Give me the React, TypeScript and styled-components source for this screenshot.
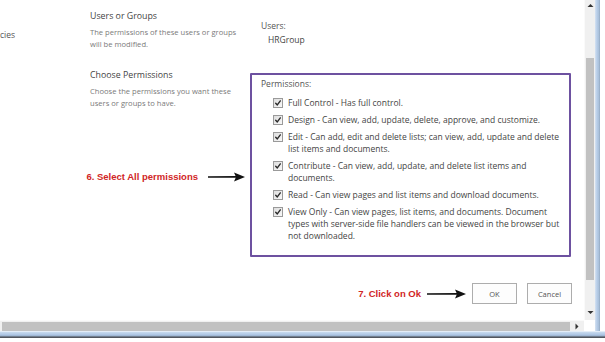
import React from "react";
import styled, { createGlobalStyle } from "styled-components";

const Global = createGlobalStyle`
  html, body { margin: 0; padding: 0; background: #fff; width: 605px; height: 342px; overflow: hidden; }
  body { font-family: "Open Sans", "Segoe UI", sans-serif; color: #444; }
  * { box-sizing: border-box; }
`;

const Window = styled.div`
  display: grid;
  grid-template-columns: 584px 11px 10px;
  grid-template-rows: 320px 11px 11px;
  width: 605px;
  height: 342px;
`;

const Content = styled.main`
  grid-column: 1;
  grid-row: 1;
  overflow: hidden;
  background: #fff;
  padding-top: 9px;
  display: flex;
  flex-direction: column;
`;

const Section = styled.section<{ $top?: number }>`
  display: grid;
  grid-template-columns: 90px 160px 1fr;
  margin-top: ${(p) => p.$top ?? 0}px;
`;

const NavCut = styled.div`
  padding-top: 20px;
  font-size: 8.5px;
  line-height: 12px;
  color: #555;
`;

const Desc = styled.div`
  display: flex;
  flex-direction: column;
`;

const Title = styled.h3`
  margin: 0;
  font-size: 8.8px;
  font-weight: 400;
  line-height: 14px;
  color: #444;
`;

const Note = styled.p`
  margin: 3px 0 0;
  font-size: 7.6px;
  line-height: 12px;
  color: #7a7a7a;
  white-space: nowrap;
`;

const Users = styled.div`
  padding: 11px 0 0 11px;
  font-size: 8.5px;
  line-height: 12px;
  color: #555;
`;

const UserName = styled.div`
  margin-top: 2px;
  padding-left: 7px;
  color: #444;
`;

const LeftPane = styled.div`
  grid-column: 1 / span 2;
  display: flex;
  flex-direction: column;
`;

const LeftText = styled.div`
  padding-left: 90px;
`;

const Callout = styled.div<{ $mt?: number; $pr?: number }>`
  display: flex;
  align-items: center;
  justify-content: flex-end;
  gap: 10px;
  margin-top: ${(p) => p.$mt ?? 0}px;
  padding-right: ${(p) => p.$pr ?? 0}px;
`;

const CalloutText = styled.span`
  font-family: "Liberation Sans", Arial, sans-serif;
  font-weight: 700;
  font-size: 9.5px;
  line-height: 12px;
  color: #d12626;
  white-space: nowrap;
`;

const PermBox = styled.div`
  margin-top: 5px;
  width: 321px;
  height: 184px;
  border: 2px solid #6d51a0;
  border-radius: 1px;
  padding: 3px 10px 0 9px;
`;

const PermLabel = styled.div`
  font-size: 8.5px;
  line-height: 12px;
  color: #555;
`;

const PermList = styled.ul`
  list-style: none;
  margin: 7px 0 0;
  padding: 0 0 0 12px;
  display: flex;
  flex-direction: column;
  gap: 5px;
`;

const PermItem = styled.li`
  display: flex;
  align-items: flex-start;
  gap: 5px;
  font-size: 8.5px;
  line-height: 12px;
  color: #444;
  white-space: nowrap;
`;

const Box = styled.span`
  flex: none;
  display: flex;
  margin-top: 1px;
`;

const ButtonRow = styled.div`
  display: flex;
  align-items: center;
  justify-content: flex-end;
  gap: 6px;
  margin-top: 26px;
  padding-right: 12px;
`;

const Buttons = styled.div`
  display: flex;
  gap: 10px;
`;

const Button = styled.button`
  width: 45px;
  height: 21px;
  padding: 0;
  border: 1px solid #adadad;
  background: #fdfdfd;
  font-family: "Open Sans", "Segoe UI", sans-serif;
  font-size: 7.5px;
  color: #555;
`;

const VScroll = styled.div`
  grid-column: 2;
  grid-row: 1;
  background: #f0f0f0;
  border-left: 1px solid #fafafa;
  display: flex;
  flex-direction: column;
  align-items: center;
`;

const ArrowCell = styled.div`
  flex: none;
  height: 13px;
  width: 100%;
  display: flex;
  align-items: center;
  justify-content: center;
`;

const VThumb = styled.div`
  width: 8px;
  height: 222px;
  margin-top: 45px;
  background: #c1c1c1;
`;

const Spacer = styled.div`
  flex: 1;
`;

const HScroll = styled.div`
  grid-column: 1;
  grid-row: 2;
  background: #f0f0f0;
  border-top: 1px solid #fafafa;
  display: flex;
  align-items: center;
  padding-left: 2px;
`;

const HThumb = styled.div`
  width: 568px;
  height: 9px;
  background: #c1c1c1;
`;

const HArrow = styled.div`
  flex: none;
  width: 14px;
  display: flex;
  justify-content: center;
`;

const Corner = styled.div`
  grid-column: 2;
  grid-row: 2;
  background: #fff;
`;

const RightFrame = styled.div`
  grid-column: 3;
  grid-row: 1 / span 2;
  background: linear-gradient(
    to right,
    #d6e3f2 0px,
    #b7cde8 2px,
    #a9bfd8 4px,
    #8ea4bd 5px,
    #ffffff 5px
  );
`;

const BottomFrame = styled.div`
  grid-column: 1 / span 3;
  grid-row: 3;
  background: linear-gradient(
    to bottom,
    #ffffff 0px,
    #c9dbef 1px,
    #aac3e2 4px,
    #98aec8 5px,
    #4a4e55 6px,
    #5a5e66 7px,
    #ffffff 7px
  );
`;

const CheckBox = () => (
  <Box>
    <svg width="10" height="10" viewBox="0 0 10 10">
      <defs>
        <linearGradient id="cbg" x1="0" y1="0" x2="1" y2="1">
          <stop offset="0" stopColor="#dcdcdc" />
          <stop offset="1" stopColor="#fafafa" />
        </linearGradient>
      </defs>
      <rect x="0.5" y="0.5" width="9" height="9" fill="url(#cbg)" stroke="#9a9a9a" />
      <path d="M2.7 5.2 L4.3 6.9 L7.3 2.9" fill="none" stroke="#2a2a2a" strokeWidth="1.4" strokeLinecap="round" strokeLinejoin="round" />
    </svg>
  </Box>
);

const Arrow = ({ w }: { w: number }) => (
  <svg width={w} height="10" viewBox={`0 0 ${w} 10`}>
    <path d={`M0 4.2 L${w - 9} 4.0 L${w - 9} 5.8 L0 5.8 Z`} fill="#111" />
    <path d={`M${w - 11} 0.5 L${w} 5 L${w - 11} 9.5 L${w - 9} 5 Z`} fill="#111" />
  </svg>
);

const Tri = ({ dir }: { dir: "up" | "down" | "right" }) => {
  const d =
    dir === "up" ? "M0.5 4 L3.5 1 L6.5 4 Z" : dir === "down" ? "M0.5 1 L3.5 4 L6.5 1 Z" : "M1.5 0.5 L4.5 3.5 L1.5 6.5 Z";
  return (
    <svg width="7" height="7" viewBox="0 0 7 7">
      <path d={d} fill="#333" />
    </svg>
  );
};

const perms: string[][] = [
  ["Full Control - Has full control."],
  ["Design - Can view, add, update, delete, approve, and customize."],
  ["Edit - Can add, edit and delete lists; can view, add, update and delete", "list items and documents."],
  ["Contribute - Can view, add, update, and delete list items and", "documents."],
  ["Read - Can view pages and list items and download documents."],
  [
    "View Only - Can view pages, list items, and documents. Document",
    "types with server-side file handlers can be viewed in the browser but",
    "not downloaded.",
  ],
];

export default function App() {
  return (
    <>
      <Global />
      <Window>
        <Content>
          <Section>
            <NavCut>cies</NavCut>
            <Desc>
              <Title>Users or Groups</Title>
              <Note>
                The permissions of these users or groups
                <br />
                will be modified.
              </Note>
            </Desc>
            <Users>
              Users:
              <UserName>HRGroup</UserName>
            </Users>
          </Section>

          <Section $top={18}>
            <LeftPane>
              <LeftText>
                <Title>Choose Permissions</Title>
                <Note>
                  Choose the permissions you want these
                  <br />
                  users or groups to have.
                </Note>
              </LeftText>
              <Callout $mt={62} $pr={5}>
                <CalloutText>6. Select All permissions</CalloutText>
                <Arrow w={37} />
              </Callout>
            </LeftPane>
            <PermBox>
              <PermLabel>Permissions:</PermLabel>
              <PermList>
                {perms.map((lines, i) => (
                  <PermItem key={i}>
                    <CheckBox />
                    <span>
                      {lines.map((l, j) => (
                        <React.Fragment key={j}>
                          {j > 0 && <br />}
                          {l}
                        </React.Fragment>
                      ))}
                    </span>
                  </PermItem>
                ))}
              </PermList>
            </PermBox>
          </Section>

          <ButtonRow>
            <CalloutText>7. Click on Ok</CalloutText>
            <Arrow w={39} />
            <Buttons>
              <Button>OK</Button>
              <Button>Cancel</Button>
            </Buttons>
          </ButtonRow>
        </Content>
        <VScroll>
          <ArrowCell>
            <Tri dir="up" />
          </ArrowCell>
          <VThumb />
          <Spacer />
          <ArrowCell>
            <Tri dir="down" />
          </ArrowCell>
        </VScroll>
        <RightFrame />
        <HScroll>
          <HThumb />
          <Spacer />
          <HArrow>
            <Tri dir="right" />
          </HArrow>
        </HScroll>
        <Corner />
        <BottomFrame />
      </Window>
    </>
  );
}
